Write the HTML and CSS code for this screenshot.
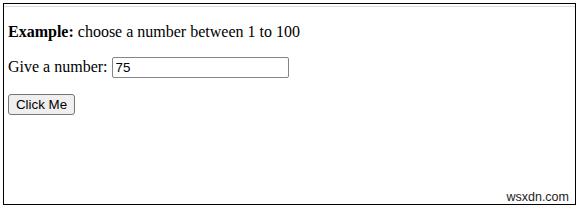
FILE: index.html
```html
<!DOCTYPE html>
<html lang="en">
<head>
    <meta charset="UTF-8">
    <title>Example</title>
    <link rel="stylesheet" href="styles.css">
</head>
<body>
    <div class="frame">
        <div class="content">
            <p><b>Example:</b> choose a number between 1 to 100</p>
            <p>Give a number: <input type="text" class="num" value="75"></p>
            <button class="btn">Click Me</button>
        </div>
        <span class="mark">wsxdn.com</span>
    </div>
</body>
</html>
```

FILE: styles.css
```css
body {
    margin: 0;
    background: #ffffff;
    font-family: 'Liberation Serif', 'Times New Roman', serif;
    font-size: 16px;
    color: #000000;
}

/* Marco del ejemplo */
.frame {
    position: relative;
    margin: 3px 0 0 3px;
    width: 571px;
    height: 200px;
    border: 1px solid #000000;
}

.content {
    margin-top: 2px;
    border-top: 1px solid #dcdcdc;
    padding: 0 4px;
    overflow: hidden;
}

p {
    margin: 16px 0;
}

.num {
    box-sizing: border-box;
    width: 177px;
    height: 21px;
    padding: 1px 3px;
    border: 1px solid #858585;
    border-radius: 2px;
    font-family: 'Liberation Sans', Arial, sans-serif;
    font-size: 13.33px;
    vertical-align: baseline;
}

.btn {
    box-sizing: border-box;
    width: 67px;
    height: 21px;
    padding: 0;
    background: #efefef;
    border: 1px solid #767676;
    border-radius: 3px;
    font-family: 'Liberation Sans', Arial, sans-serif;
    font-size: 13.33px;
    color: #000000;
}

/* Marca de agua */
.mark {
    position: absolute;
    right: 6px;
    bottom: 0;
    font-family: 'Liberation Sans', Arial, sans-serif;
    font-size: 12.5px;
    color: #222222;
}
```
